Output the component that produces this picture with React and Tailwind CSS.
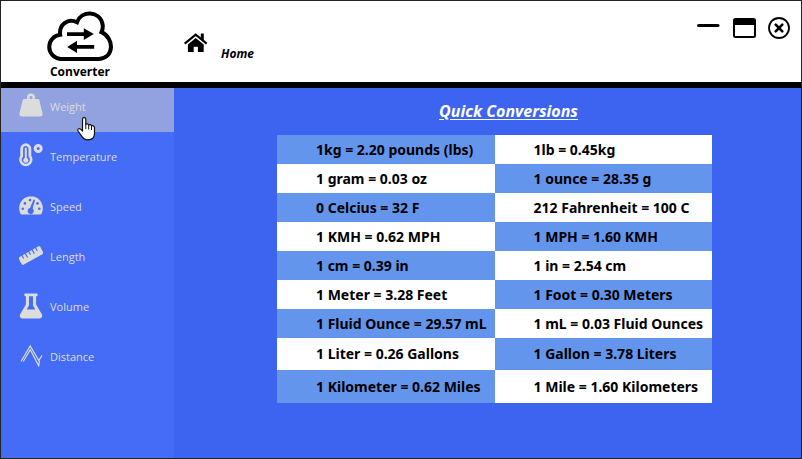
const units = [
  { name: 'Weight', Icon: WeightIcon, active: true },
  { name: 'Temperature', Icon: TemperatureIcon },
  { name: 'Speed', Icon: SpeedIcon },
  { name: 'Length', Icon: LengthIcon },
  { name: 'Volume', Icon: VolumeIcon },
  { name: 'Distance', Icon: DistanceIcon },
];

const conversions = [
  ['1kg = 2.20 pounds (lbs)', '1lb = 0.45kg'],
  ['1 gram = 0.03 oz', '1 ounce = 28.35 g'],
  ['0 Celcius = 32 F', '212 Fahrenheit = 100 C'],
  ['1 KMH = 0.62 MPH', '1 MPH = 1.60 KMH'],
  ['1 cm = 0.39 in', '1 in = 2.54 cm'],
  ['1 Meter = 3.28 Feet', '1 Foot = 0.30 Meters'],
  ['1 Fluid Ounce = 29.57 mL', '1 mL = 0.03 Fluid Ounces'],
  ['1 Liter = 0.26 Gallons', '1 Gallon = 3.78 Liters'],
  ['1 Kilometer = 0.62 Miles', '1 Mile = 1.60 Kilometers'],
];

function WeightIcon() {
  return (
    <svg width="24" height="24" viewBox="0 0 24 24" aria-hidden="true">
      <path fill="currentColor" d="M5.4 6h13.2c.9 0 1.5.5 1.8 1.4l3.100 12.900c.4 1.900-.6 3.300-2.300 3.300H2.800C1.100 23.600.100 22.200.5 20.300L3.600 7.400C3.900 6.500 4.500 6 5.400 6z" />
      <circle cx="12" cy="4.400" r="4" fill="currentColor" />
      <circle cx="12" cy="4.400" r="1.500" fill="#92a2e0" />
    </svg>
  );
}

function TemperatureIcon() {
  return (
    <svg width="24" height="24" viewBox="0 0 24 24" fill="none" stroke="currentColor" aria-hidden="true">
      <path strokeWidth="2.800" d="M2.700 5.800a4.100 4.100 0 0 1 8.200 0v7.400a5.300 5.300 0 1 1-8.200 0z" />
      <path strokeWidth="2" strokeLinecap="round" d="M6.800 5.500v11" />
      <circle cx="6.800" cy="17.200" r="2.500" fill="currentColor" stroke="none" />
      <circle cx="19.200" cy="5.500" r="3" strokeWidth="3" />
    </svg>
  );
}

function SpeedIcon() {
  return (
    <svg width="24" height="24" viewBox="0 0 24 24" aria-hidden="true">
      <path fill="currentColor" d="M12 3.300C5.400 3.300.200 8.600.200 15c0 2 .4 4 1.300 5.700.3.500.7.800 1.300.8h18.400c.6 0 1-.3 1.300-.8.9-1.700 1.300-3.700 1.300-5.700 0-6.400-5.200-11.700-11.800-11.700z" />
      <g fill="#446cf6">
        <circle cx="3.800" cy="15.800" r="1.300" />
        <circle cx="5.900" cy="10.400" r="1.300" />
        <circle cx="11" cy="7.100" r="1.300" />
        <circle cx="18.500" cy="10.400" r="1.300" />
        <circle cx="20.300" cy="15.800" r="1.300" />
        <path d="M14.600 6.400l1.500.5-2.500 8.700a3.100 3.100 0 1 1-2.600-.6z" />
      </g>
    </svg>
  );
}

function LengthIcon() {
  return (
    <svg width="24" height="24" viewBox="0 0 24 24" aria-hidden="true">
      <g transform="translate(0 .6) rotate(-29 12 12)">
        <rect x="-.3" y="7.600" width="24.600" height="8.800" rx="1.200" fill="currentColor" />
        <path stroke="#446cf6" strokeWidth="1.200" d="M4.200 7v4M8.100 7v5M12 7v4M15.900 7v5M19.800 7v4" />
      </g>
    </svg>
  );
}

function VolumeIcon() {
  return (
    <svg width="24" height="26" viewBox="0 0 24 26" aria-hidden="true">
      <path fill="currentColor" fillRule="evenodd" d="M6.500.5h11c.8 0 1.200.5 1.200 1.300s-.4 1.400-1.200 1.400h-.4v8.200l5.600 9.600c1.300 2.300 0 4.500-2.400 4.500H3.700c-2.400 0-3.700-2.200-2.400-4.500l5.600-9.600V3.200h-.4c-.8 0-1.200-.6-1.200-1.400S5.700.5 6.500.5zM10 3.200v9L7.700 16.400h8.600L14 12.200v-9z" />
    </svg>
  );
}

function DistanceIcon() {
  return (
    <svg width="24" height="24" viewBox="0 0 24 24" fill="none" stroke="currentColor" aria-hidden="true">
      <path strokeWidth="1.200" d="M2 18.500L11.200 3l8.600 14.500L23 12.500" />
      <path strokeWidth="1.200" d="M4.200 18.500L11.300 6.800l8.400 16 .8-5" />
    </svg>
  );
}

function CloudLogo() {
  return (
    <svg width="66" height="50" viewBox="0 0 66 50" aria-hidden="true">
      <path
        fill="none"
        stroke="#000"
        strokeWidth="4"
        d="M13.500 48A12.200 12.200 0 0 1 13.200 23.700C11.800 14 20.500 6.600 30 11.200C34.500-.8 52.500-.5 55.500 13C56.200 16 55.500 19 54.500 21.200C67.500 27 67.500 47 52 48Z"
      />
      <path d="M20 21.200h16.800v-4L46.800 23 36.800 28.900v-4H20z" />
      <path d="M47.200 34.100H30v-4.300L20.200 36 30 42v-4.200h17.200z" />
    </svg>
  );
}

function HomeIcon() {
  return (
    <svg width="24" height="20" viewBox="0 0 24 20" aria-hidden="true">
      <path fill="none" stroke="#000" strokeWidth="2.100" d="M.7 10.600L11.700 1.700l11 8.900" />
      <path d="M16.800.6h3v7l-3-2.500z" />
      <path d="M11.700 5.100l8 6.500v6.600c0 .6-.3.9-.9.9h-4.900v-5.300H9.700v5.300H4.800c-.6 0-.9-.3-.9-.9v-6.600z" />
    </svg>
  );
}

function PointerCursor() {
  return (
    <svg className="absolute top-[29px] left-[76px]" width="19" height="24" viewBox="0 0 19 24" aria-hidden="true">
      <path
        fill="#fff"
        stroke="#111"
        strokeWidth="1.200"
        strokeLinejoin="round"
        d="M5.500 2.500c0-2.400 3.300-2.400 3.300 0v4.900c.8-.9 2.500-.7 2.900.5 1-.6 2.400-.3 2.800.9 1.300-.5 3 .2 3 2v5.500c0 4.200-2.600 6.500-6.600 6.500-3.400 0-4.900-1.300-6.400-3.900L1 14c-.8-1.900 1-3.100 2.500-1.900l2 1.900z"
      />
      <path fill="none" stroke="#111" d="M8.800 7v5M11.700 8v4.500M14.500 9v4" />
    </svg>
  );
}

function Header() {
  return (
    <header className="flex items-start border-b-6 border-black bg-white">
      <div className="flex w-[158px] flex-col items-center gap-[2px] pt-[10px] pb-px">
        <CloudLogo />
        <span className="font-['Open_Sans','Noto_Sans',sans-serif] text-[12px] leading-[18px] font-bold">Converter</span>
      </div>
      <a href="#home" className="ml-[25px] flex items-start gap-[13px] pt-8">
        <HomeIcon />
        <span className="pt-3 text-[12px] leading-[18px] font-bold italic">Home</span>
      </a>
      <div className="ml-auto flex items-center gap-3 pt-4 pr-[11px]">
        <button type="button" aria-label="Minimize">
          <svg width="26" height="24" viewBox="0 0 26 24">
            <path stroke="#000" strokeWidth="3" strokeLinecap="round" d="M4.500 8.500h19.500" />
          </svg>
        </button>
        <button type="button" aria-label="Maximize">
          <svg width="24" height="24" viewBox="0 0 24 24">
            <rect x="2" y="2" width="21" height="18" rx="1.500" fill="none" stroke="#000" strokeWidth="2" />
            <path d="M2 2h21v6H2z" />
          </svg>
        </button>
        <button type="button" aria-label="Close">
          <svg width="22" height="24" viewBox="0 0 22 24" fill="none" stroke="#000" strokeLinecap="round">
            <circle cx="11" cy="11" r="10" strokeWidth="1.800" />
            <path strokeWidth="2.600" d="M7.700 7.700l6.600 6.600M14.300 7.700l-6.600 6.600" />
          </svg>
        </button>
      </div>
    </header>
  );
}

function Sidebar() {
  return (
    <nav className="relative flex w-[173px] shrink-0 flex-col gap-[6px] bg-[#446cf6] text-[#dcdcdc]">
      {units.map(({ name, Icon, active }) => (
        <button
          key={name}
          type="button"
          className={
            "flex h-11 cursor-pointer items-start gap-[7px] pt-[5px] pl-[18px] font-['Open_Sans','Noto_Sans',sans-serif] text-[11px] leading-[28px] " +
            (active ? 'bg-[#92a2e0]' : '')
          }
        >
          <Icon />
          {name}
        </button>
      ))}
      <PointerCursor />
    </nav>
  );
}

export default function App() {
  return (
    <div className="flex min-h-screen flex-col border border-[#222] bg-[#3c64f0] font-['Noto_Sans','Open_Sans',sans-serif] text-black">
      <Header />
      <div className="flex grow">
        <Sidebar />
        <main className="grow pt-[11px] pr-[89px] pl-[103px]">
          <h1 className="pl-7 text-center text-[16px] leading-6 font-bold text-white italic underline underline-offset-2">
            Quick Conversions
          </h1>
          <table className="mt-3 w-full table-fixed border-collapse text-left text-[14px] leading-5 font-bold">
            <tbody>
              {conversions.map(([left, right], i) => (
                <tr key={left} className={i < 7 ? 'h-[29px]' : i === 7 ? 'h-8' : 'h-[33px]'}>
                  <td className={'p-0 pl-[39px] whitespace-nowrap ' + (i % 2 ? 'bg-white' : 'bg-[#6495ed]')}>{left}</td>
                  <td className={'p-0 pl-[39px] whitespace-nowrap ' + (i % 2 ? 'bg-[#6495ed]' : 'bg-white')}>{right}</td>
                </tr>
              ))}
            </tbody>
          </table>
        </main>
      </div>
    </div>
  );
}
